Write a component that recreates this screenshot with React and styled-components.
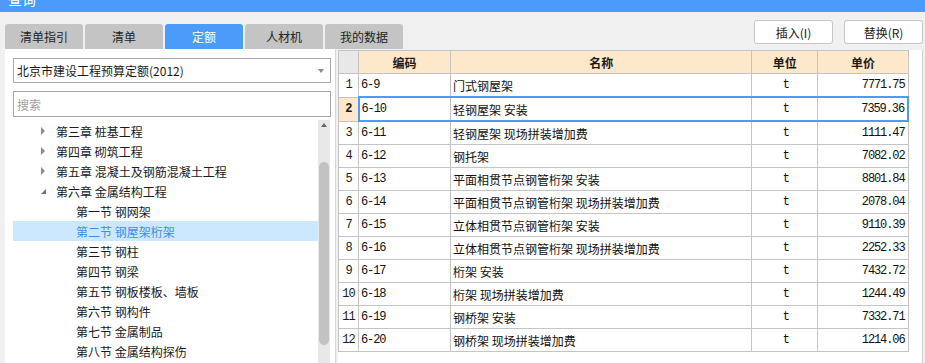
import React from 'react';
import styled, { createGlobalStyle } from 'styled-components';

const GlobalStyle = createGlobalStyle`
  body {
    margin: 0;
    background: #f0f0f0;
    font-family: "Noto Sans CJK SC", "Noto Sans", sans-serif;
    font-size: 12px;
    color: #1a1a1a;
  }
`;

const Window = styled.div`
  width: 925px;
  height: 363px;
  overflow: hidden;
  display: flex;
  flex-direction: column;
  background: #f0f0f0;
`;

const TitleBar = styled.div`
  height: 12px;
  flex: none;
  background: #4a9bfa;
  overflow: hidden;
  color: #fff;
  font-size: 14px;
  line-height: 14px;
  padding-left: 8px;
`;

const TitleText = styled.span`
  display: block;
  transform: translateY(-8px);
`;

const TopRow = styled.div`
  height: 37px;
  flex: none;
  display: flex;
  justify-content: space-between;
  padding: 0 2px 0 5px;
`;

const Tabs = styled.div`
  display: flex;
  align-items: flex-end;
  gap: 2px;
`;

const Tab = styled.div`
  width: 78px;
  height: 25px;
  display: flex;
  align-items: center;
  justify-content: center;
  border-radius: 3px 3px 0 0;
  background: ${p => (p.$active ? '#4a9bfa' : '#c4c4c4')};
  color: ${p => (p.$active ? '#fff' : '#222')};
  font-size: 12px;
`;

const Buttons = styled.div`
  display: flex;
  gap: 11px;
  padding-top: 8px;
`;

const Button = styled.button`
  width: 79px;
  height: 24px;
  background: #fff;
  border: 1px solid #c6c6c6;
  border-radius: 3px;
  font-family: inherit;
  font-size: 12px;
  color: #222;
  padding: 0;
`;

const Main = styled.div`
  flex: 1;
  display: flex;
  padding-left: 5px;
  min-height: 0;
`;

const LeftPanel = styled.div`
  width: 322px;
  background: #fff;
  border-right: 1px solid #d6d6d6;
  padding: 9px 0 0 8px;
  display: flex;
  flex-direction: column;
  gap: 8px;
`;

const Select = styled.div`
  box-sizing: border-box;
  width: 318px;
  height: 25px;
  border: 1px solid #a8a8a8;
  display: flex;
  align-items: center;
  justify-content: space-between;
  padding: 0 6px 0 3px;
  font-size: 12px;
`;

const DropArrow = styled.span`
  width: 0;
  height: 0;
  border-left: 3.5px solid transparent;
  border-right: 3.5px solid transparent;
  border-top: 4px solid #8a8a8a;
`;

const Search = styled.div`
  box-sizing: border-box;
  width: 318px;
  height: 26px;
  border: 1px solid #a8a8a8;
  display: flex;
  align-items: center;
  padding-left: 3px;
  color: #a0a0a0;
  font-size: 12px;
`;

const TreeArea = styled.div`
  flex: 1;
  display: flex;
  margin-top: -5px;
  min-height: 0;
  overflow: hidden;
`;

const Tree = styled.div`
  width: 305px;
  padding-top: 1px;
`;

const TreeRow = styled.div`
  height: 20px;
  display: flex;
  align-items: center;
  padding-left: ${p => (p.$level === 1 ? 28 : 63)}px;
  background: ${p => (p.$selected ? '#cce8ff' : 'transparent')};
  color: ${p => (p.$selected ? '#3d8de8' : '#1a1a1a')};
  font-size: 12px;
  white-space: pre;
`;

const Caret = styled.span`
  width: 15px;
  height: 20px;
  display: flex;
  align-items: center;
  flex: none;
`;

const Collapsed = styled.span`
  width: 0;
  height: 0;
  border-top: 4px solid transparent;
  border-bottom: 4px solid transparent;
  border-left: 4px solid #8c8c8c;
`;

const Expanded = styled.span`
  width: 0;
  height: 0;
  border-left: 5px solid transparent;
  border-bottom: 5px solid #707070;
  margin-top: 1px;
`;

const ScrollTrack = styled.div`
  width: 12px;
  background: #e8e8e8;
  display: flex;
  flex-direction: column;
  align-items: center;
`;

const ScrollUp = styled.span`
  margin-top: 3px;
  width: 0;
  height: 0;
  border-left: 3.5px solid transparent;
  border-right: 3.5px solid transparent;
  border-bottom: 4px solid #666;
`;

const ScrollThumb = styled.div`
  margin-top: 35px;
  width: 10px;
  height: 183px;
  border-radius: 5px;
  background: #c2c2c2;
`;

const GridPanel = styled.div`
  margin: 1px 0 0 2px;
  width: 584px;
  background: #fff;
  border-right: 1px solid #d0d0d0;
`;

const Table = styled.table`
  border-collapse: collapse;
  table-layout: fixed;
  width: 571px;
`;

const HeadCell = styled.th`
  height: 22px;
  padding: 0;
  border: 1px solid #c4c4c4;
  background: ${p => (p.$corner ? '#e8e8e8' : '#fee8cb')};
  font-weight: bold;
  font-size: 12px;
  color: #1a1a1a;
`;

const Cell = styled.td`
  height: 22px;
  padding: ${p => (p.$align === 'right' ? '0 3px 0 0' : '0 0 0 2px')};
  border: 1px solid #c4c4c4;
  text-align: ${p => p.$align || 'left'};
  white-space: nowrap;
  overflow: hidden;
  font-family: ${p => (p.$mono ? '"Liberation Mono", monospace' : 'inherit')};
  font-size: 12px;
  letter-spacing: ${p => (p.$mono ? '-1.1px' : '0')};
  color: #111;
`;

const NumCell = styled.td`
  height: 22px;
  padding: 0;
  border: 1px solid #c4c4c4;
  text-align: center;
  font-family: "Liberation Mono", monospace;
  font-size: 12px;
  letter-spacing: -1px;
  background: ${p => (p.$selected ? '#fee8cb' : '#fff')};
  font-weight: ${p => (p.$selected ? 'bold' : 'normal')};
`;

const Row = styled.tr`
  ${p =>
    p.$selected &&
    `
    td + td { border-top: 2px solid #4a9bfa; border-bottom: 2px solid #4a9bfa; }
    td:nth-child(2) { border-left: 2px solid #4a9bfa; }
    td:last-child { border-right: 2px solid #4a9bfa; }
  `}
`;

const tabs = ['清单指引', '清单', '定额', '人材机', '我的数据'];

const tree = [
  { level: 1, text: '第三章 桩基工程' },
  { level: 1, text: '第四章 砌筑工程' },
  { level: 1, text: '第五章 混凝土及钢筋混凝土工程' },
  { level: 1, text: '第六章 金属结构工程', open: true },
  { level: 2, text: '第一节 钢网架' },
  { level: 2, text: '第二节 钢屋架桁架', selected: true },
  { level: 2, text: '第三节 钢柱' },
  { level: 2, text: '第四节 钢梁' },
  { level: 2, text: '第五节 钢板楼板、墙板' },
  { level: 2, text: '第六节 钢构件' },
  { level: 2, text: '第七节 金属制品' },
  { level: 2, text: '第八节 金属结构探伤' },
];

const rows = [
  ['6-9', '门式钢屋架', '7771.75'],
  ['6-10', '轻钢屋架 安装', '7359.36'],
  ['6-11', '轻钢屋架 现场拼装增加费', '1111.47'],
  ['6-12', '钢托架', '7082.02'],
  ['6-13', '平面相贯节点钢管桁架 安装', '8801.84'],
  ['6-14', '平面相贯节点钢管桁架 现场拼装增加费', '2078.04'],
  ['6-15', '立体相贯节点钢管桁架 安装', '9110.39'],
  ['6-16', '立体相贯节点钢管桁架 现场拼装增加费', '2252.33'],
  ['6-17', '桁架 安装', '7432.72'],
  ['6-18', '桁架 现场拼装增加费', '1244.49'],
  ['6-19', '钢桥架 安装', '7332.71'],
  ['6-20', '钢桥架 现场拼装增加费', '1214.06'],
];

export default function App() {
  return (
    <>
      <GlobalStyle />
      <Window>
        <TitleBar>
          <TitleText>查询</TitleText>
        </TitleBar>
        <TopRow>
          <Tabs>
            {tabs.map(t => (
              <Tab key={t} $active={t === '定额'}>{t}</Tab>
            ))}
          </Tabs>
          <Buttons>
            <Button>插入(I)</Button>
            <Button>替换(R)</Button>
          </Buttons>
        </TopRow>
        <Main>
          <LeftPanel>
            <Select>
              <span>北京市建设工程预算定额(2012)</span>
              <DropArrow />
            </Select>
            <Search>搜索</Search>
            <TreeArea>
              <Tree>
                {tree.map(n => (
                  <TreeRow key={n.text} $level={n.level} $selected={n.selected}>
                    {n.level === 1 && <Caret>{n.open ? <Expanded /> : <Collapsed />}</Caret>}
                    {n.text}
                  </TreeRow>
                ))}
              </Tree>
              <ScrollTrack>
                <ScrollUp />
                <ScrollThumb />
              </ScrollTrack>
            </TreeArea>
          </LeftPanel>
          <GridPanel>
            <Table>
              <colgroup>
                <col style={{ width: 20 }} />
                <col style={{ width: 92 }} />
                <col style={{ width: 301 }} />
                <col style={{ width: 66 }} />
                <col style={{ width: 90 }} />
              </colgroup>
              <thead>
                <tr>
                  <HeadCell $corner />
                  <HeadCell>编码</HeadCell>
                  <HeadCell>名称</HeadCell>
                  <HeadCell>单位</HeadCell>
                  <HeadCell>单价</HeadCell>
                </tr>
              </thead>
              <tbody>
                {rows.map(([code, name, price], i) => (
                  <Row key={code} $selected={i === 1}>
                    <NumCell $selected={i === 1}>{i + 1}</NumCell>
                    <Cell $mono>{code}</Cell>
                    <Cell>{name}</Cell>
                    <Cell $mono $align="center">t</Cell>
                    <Cell $mono $align="right">{price}</Cell>
                  </Row>
                ))}
              </tbody>
            </Table>
          </GridPanel>
        </Main>
      </Window>
    </>
  );
}
